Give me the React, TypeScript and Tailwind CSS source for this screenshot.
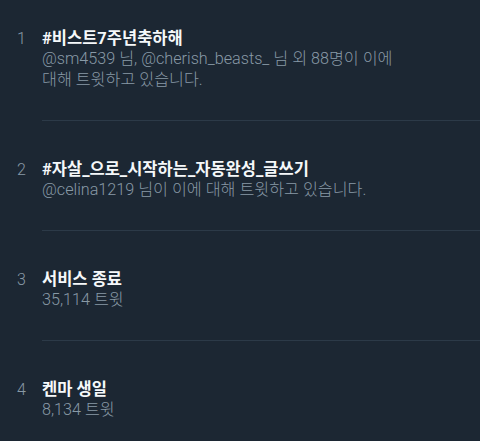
const trends = [
  {
    rank: 1,
    title: "#비스트7주년축하해",
    sub: "@sm4539 님, @cherish_beasts_ 님 외 88명이 이에 대해 트윗하고 있습니다.",
  },
  {
    rank: 2,
    title: "#자살_으로_시작하는_자동완성_글쓰기",
    sub: "@celina1219 님이 이에 대해 트윗하고 있습니다.",
  },
  { rank: 3, title: "서비스 종료", sub: "35,114 트윗" },
  { rank: 4, title: "켄마 생일", sub: "8,134 트윗" },
];

export default function App() {
  return (
    <div
      className="w-[480px] h-[441px] overflow-hidden bg-[#1c2733]"
      style={{ fontFamily: "Roboto, 'Noto Sans CJK KR', sans-serif" }}
    >
      {trends.map((t, i) => (
        <div key={t.rank} className={`flex ${i === 0 ? "pt-[30px]" : "pt-[40px]"}`}>
          <div className="w-[42px] shrink-0 pl-[17px] text-[16px] leading-[18px] font-light text-[#8899a6]">
            {t.rank}
          </div>
          <div className="flex-1 border-b border-[#2c3a48] pb-[30px]">
            <div className="text-[16.5px] leading-[18px] font-bold text-[#f5f8fa]">{t.title}</div>
            <div className="pr-[60px] break-keep text-[16.2px] leading-[21px] font-light text-[#8899a6]">
              {t.sub}
            </div>
          </div>
        </div>
      ))}
    </div>
  );
}
